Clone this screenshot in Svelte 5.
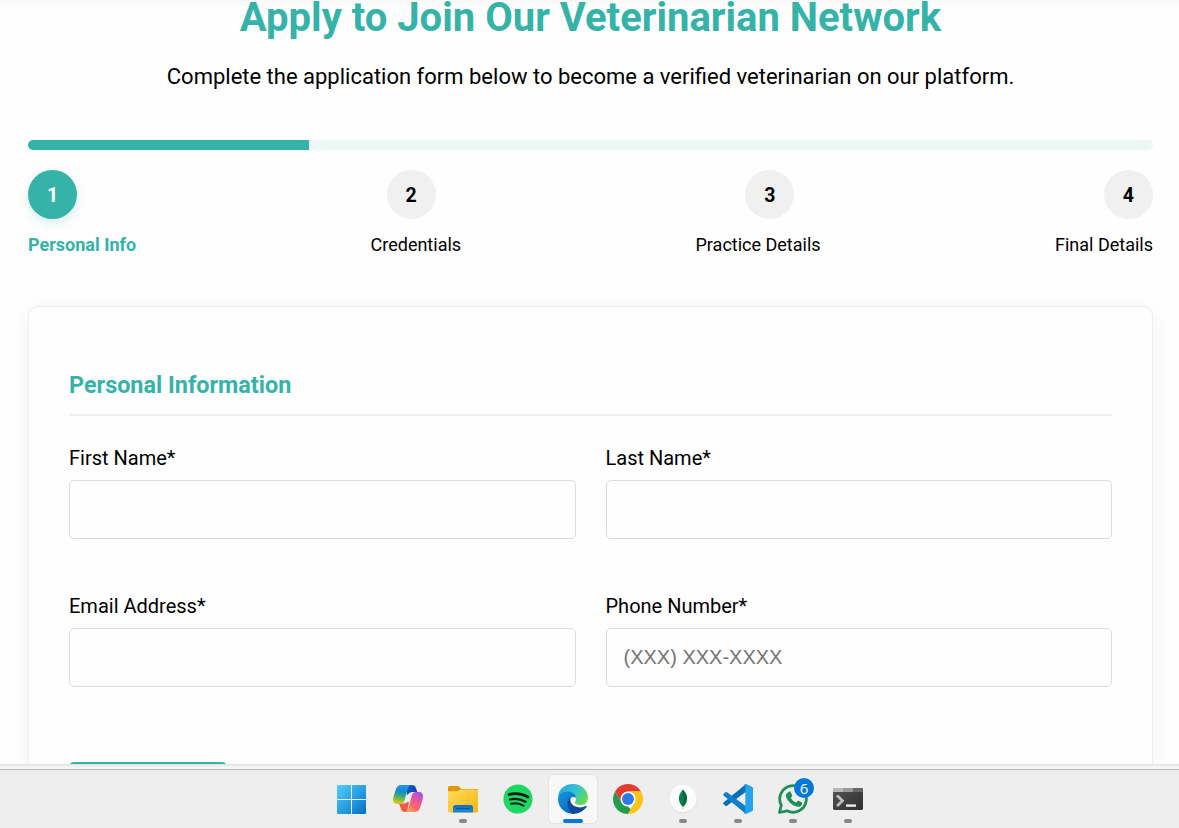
<script>
  const steps = ['Personal Info', 'Credentials', 'Practice Details', 'Final Details'];
  const fields = [
    { label: 'First Name*', hint: '' },
    { label: 'Last Name*', hint: '' },
    { label: 'Email Address*', hint: '' },
    { label: 'Phone Number*', hint: '(XXX) XXX-XXXX' }
  ];
</script>

<div class="screen">
  <main>
    <h1>Apply to Join Our Veterinarian Network</h1>
    <p class="intro">Complete the application form below to become a verified veterinarian on our platform.</p>
    <div class="progress"><div class="fill"></div></div>
    <div class="circles">
      {#each steps as _, i}
        <span class="circle" class:active={i === 0}>{i + 1}</span>
      {/each}
    </div>
    <div class="labels">
      {#each steps as step, i}
        <span class:current={i === 0}>{step}</span>
      {/each}
    </div>
    <section class="card">
      <h2>Personal Information</h2>
      <div class="grid">
        {#each fields as field}
          <label><span>{field.label}</span><input type="text" placeholder={field.hint} /></label>
        {/each}
      </div>
      <button aria-label="Next step"></button>
    </section>
  </main>

  <footer>
    <div class="edge"></div>
    <nav>
      <div class="app">
        <svg viewBox="1 0 48 48">
          <defs><linearGradient id="winAll" gradientUnits="userSpaceOnUse" x1="9" y1="10" x2="38" y2="39"><stop stop-color="#54d0fb" /><stop offset="1" stop-color="#006fc9" /></linearGradient></defs>
          <path fill="url(#winAll)" d="M10 10h13v14H9V11q0-1 1-1zM24 10H37q1 0 1 1v13H24zM9 25h14v14H10q-1 0-1-1zM24 25H38v13q0 1-1 1H24z" />
        </svg>
      </div>
      <div class="app">
        <svg viewBox="-1 0 48 48">
          <defs>
            <linearGradient id="coA" x1=".55" y1="0" x2=".35" y2="1"><stop stop-color="#1b9cf0" /><stop offset=".35" stop-color="#168acb" /><stop offset=".65" stop-color="#50b35d" /><stop offset="1" stop-color="#eac711" /></linearGradient>
            <linearGradient id="coB" x1=".8" y1="0" x2=".3" y2="1"><stop stop-color="#a04ff1" /><stop offset=".45" stop-color="#ee5890" /><stop offset=".75" stop-color="#ff6b62" /><stop offset="1" stop-color="#ffa255" /></linearGradient>
            <linearGradient id="coC" x1="0" y1="0" x2="1" y2="1"><stop stop-color="#0f55d0" /><stop offset="1" stop-color="#1b3fb3" /></linearGradient>
          </defs>
          <path fill="url(#coC)" d="M22 10h5q3 0 4 3l1.200 4H27q-3 0-4 2.500L22 20z" />
          <path fill="#f45a43" d="M14.500 28.500h4.500q2 0 3-1.500l2 0-2 10h-2q-3 0-4-3l-1-3q-.5-2-1.500-2z" />
          <path fill="url(#coA)" d="M16.500 10h9.500q-2 0-3 3l-3.500 12.500Q18.600 29 15 29h-2.600Q8 29 8 25q0-2 1-5l2-6q1.400-4 5.500-4z" />
          <path fill="url(#coB)" d="M31 17h3q4 0 4 4.500 0 2-1 5l-2 6.500q-1.400 4-5.500 4H20q2.500 0 3.300-3l3.400-13Q27.800 17 31 17z" />
        </svg>
      </div>
      <div class="app">
        <svg viewBox="-1 0 48 48">
          <defs><linearGradient id="fold" x1="0" y1="0" x2="1" y2="1"><stop stop-color="#ffdc60" /><stop offset="1" stop-color="#fbb50c" /></linearGradient>
          <linearGradient id="tray" x1="0" y1="0" x2="0" y2="1"><stop stop-color="#0c70c2" /><stop offset="1" stop-color="#1b88d8" /></linearGradient></defs>
          <path fill="#dc9a04" d="M9.500 11h8q1.200 0 2 1l1.700 2H37q1 0 1 1v3H8v-5.500q0-1.500 1.500-1.500z" />
          <path fill="url(#fold)" d="M8 16.200h10l3-1.700h15.500q1.500 0 1.500 1.500v20q0 1.500-1.500 1.500h-27Q8 37.500 8 36z" />
          <path fill="url(#tray)" d="M13 37.500V32.500q0-2.500 2.500-2.500h15Q33 30 33 32.500v5z" /><path stroke="#074f91" d="M16 33.500h14" />
        </svg><i></i>
      </div>
      <div class="app">
        <svg viewBox="-1 0 48 48"><circle cx="23" cy="24" r="14.600" fill="#1ed760" /><g fill="none" stroke="#151a17" stroke-linecap="round"><path stroke-width="2.700" d="M14 19.500q10-2.500 19 2.500" /><path stroke-width="2.300" d="M15 24.500q8-2 15.500 2.300" /><path stroke-width="1.900" d="M16 28.800q7-1.600 12.500 1.900" /></g></svg>
      </div>
      <div class="app selected">
        <svg viewBox="-1 0 48 48">
          <defs><linearGradient id="edTop" x1="0" y1=".2" x2="1" y2=".7"><stop stop-color="#2aa6dd" /><stop offset=".5" stop-color="#31c4d4" /><stop offset="1" stop-color="#68df46" /></linearGradient>
          <linearGradient id="edLeft" x1="0" y1="0" x2=".7" y2="1"><stop stop-color="#1595df" /><stop offset="1" stop-color="#0669bd" /></linearGradient></defs>
          <path fill="url(#edTop)" d="M8 23C8 14.500 14.500 9 23 9c9 0 15 6.500 15 13.500 0 5-3.500 7.500-8 7.500-3 0-5.200-1-5.200-2.200 0-1 1.200-1.300 1.200-3.500 0-3.500-3.500-6.800-8.500-6.800C12 17.500 8 21 8 23z" />
          <path fill="url(#edLeft)" d="M8 24c0-4.500 4.500-7.500 9.500-7.500 4.500 0 8 2.500 8.500 6-4-2-8 1.500-8 6 0 5.500 4.500 9.500 7.500 10.300C15.500 40 8 32.500 8 24z" />
          <path fill="#0c4c99" d="M20.500 22c-4.500 3.500-3.800 12 2.200 16.700 5.500.6 10.800-2.400 14-6.900.4-.7-.2-1.100-.9-.7-5.500 3-15.500 1-15.500-6.500 0-1 .1-1.900.2-2.600z" />
        </svg><i></i>
      </div>
      <div class="app">
        <svg viewBox="-1 0 48 48"><path fill="#e33b2e" d="M10 16.500A15 15 0 0 1 36 16.500H23l-6.500 11.300z" /><path fill="#229b4b" d="M10 16.500l6.500 11.200L23 31.500l3 3-3.200 4.500A15 15 0 0 1 10 16.500z" /><path fill="#fdc316" d="M36 16.500A15 15 0 0 1 22.800 39l6.700-11.300V20l-6.500-3.500z" /><circle cx="23" cy="24" r="7.500" fill="#fff" /><circle cx="23" cy="24" r="6" fill="#2c7be9" /></svg>
      </div>
      <div class="app">
        <svg viewBox="-1 0 48 48"><circle cx="23" cy="24" r="14.200" fill="#dedede" /><circle cx="23" cy="23.500" r="13.700" fill="#fcfcfc" /><path fill="#08834d" d="M23 14.500c-6 6-5 13 0 17.500z" /><path fill="#08683e" d="M23 14.500c6 6 5 13 0 17.500z" /><path stroke="#9db9a8" stroke-width=".7" d="M23 31v3" /></svg><i></i>
      </div>
      <div class="app">
        <svg viewBox="-1 0 48 48"><path fill="#0870b5" d="M31 9L8.500 27.500q-.7.700 0 1.500l2 1.800q.7.600 1.500 0L31 16.700z" /><path fill="#127fc8" d="M31 39L8.500 20.500q-.7-.7 0-1.500l2-1.800q.7-.6 1.500 0L31 31.300z" /><path fill="#27a2ef" d="M31 9l6 2.700q1 .5 1 1.500v21.600q0 1-1 1.500L31 39q-1.400.4-2.300-.6 1.600.7 1.600-1.200V10.800q0-1.900-1.600-1.200.9-1 2.300-.6z" /></svg><i></i>
      </div>
      <div class="app">
        <svg viewBox="-1 0 48 48"><path fill="none" stroke="#1f8f58" stroke-width="2.800" stroke-linejoin="round" d="M9.500 37.500l1.800-7.300A13.300 13.300 0 1 1 17 35.800z" /><path fill="#1f8f58" d="M18.200 17.200q.8-1 1.900-.6.500.1.800.8l1.200 2.800q.3.700-.2 1.300l-1.100 1.400q1.900 3.300 5.300 4.800l1.400-1.700q.5-.6 1.200-.2l2.900 1.400q.9.500.6 1.500-.7 3.100-4.300 3.100-4.500-.5-8.500-4.600-6.500-7.300-1.200-10z" /></svg>
        <b>6</b><i></i>
      </div>
      <div class="app">
        <svg viewBox="-1 0 48 48"><defs><linearGradient id="term" x1="0" y1="0" x2="1" y2="1"><stop stop-color="#535353" /><stop offset="1" stop-color="#303030" /></linearGradient></defs><rect x="8" y="13" width="30" height="22" rx="1.500" fill="url(#term)" /><path fill="#b7b7b7" d="M9.500 13H18v4H8v-2.500q0-1.500 1.500-1.500z" /><path fill="#989898" d="M18 13h10v4H18z" /><path fill="#686868" d="M28 13h8.500q1.500 0 1.500 1.500V17H28z" /><path fill="none" stroke="#bdbdbd" stroke-width="2.800" d="M12 20.500l5.500 5.300-5.500 5.200" /><path stroke="#eee" stroke-width="2.400" d="M21 30.600h10" /></svg><i></i>
      </div>
    </nav>
  </footer>
</div>

<style>
  :global(body) { margin: 0; background: #fefefe; }
  .screen { height: 828px; overflow: hidden; display: flex; flex-direction: column; font-family: Roboto, sans-serif; color: #000; }
  main { box-sizing: border-box; height: 764px; overflow: hidden; padding: 0 26px 0 28px; background: linear-gradient(#f9f9f9, #fefefe 7px); }
  h1 { margin: 0; text-align: center; font-size: 40px; line-height: 36px; font-weight: 700; color: #36b3a8; white-space: nowrap; }
  .intro { margin: 25px 0 0; font-size: 22px; line-height: 32px; text-align: center; white-space: nowrap; }
  .progress { margin-top: 47px; height: 10px; border-radius: 5px; background: #edf7f5; overflow: hidden; }
  .fill { width: 25%; height: 100%; background: #36b3a8; }
  .circles { margin-top: 20px; display: flex; justify-content: space-between; }
  .circle { width: 49px; height: 49px; border-radius: 50%; background: #f0f0f0; font-size: 19.500px; line-height: 51px; text-align: center; font-weight: 700; }
  .active { background: #36b3a8; color: #fff; box-shadow: 0 4px 10px rgba(54, 179, 168, .2); }
  .labels { margin-top: 12px; display: flex; justify-content: space-between; font-size: 18px; line-height: 28px; white-space: nowrap; }
  .current { color: #36b3a8; font-weight: 700; }
  .card { box-sizing: border-box; margin-top: 47px; height: 600px; padding: 60px 40px 0; border: 1px solid #eee; border-radius: 10px; background: #fefefe; box-shadow: 0 5px 20px rgba(0, 0, 0, .05); }
  h2 { margin: 0; height: 47px; border-bottom: 2px solid #f0f0f0; font-size: 23.400px; line-height: 36px; font-weight: 700; color: #36b3a8; }
  .grid { margin-top: 26px; display: grid; grid-template-columns: 1fr 1fr; column-gap: 30px; row-gap: 51px; }
  label { display: flex; flex-direction: column; height: 97px; font-size: 20px; line-height: 32px; }
  label span { height: 38px; }
  input { box-sizing: border-box; width: 100%; height: 59px; padding: 0 17px; border: 1px solid #ddd; border-radius: 5px; background: #fefefe; font: 20px "Liberation Sans", sans-serif; outline: 0; }
  input::placeholder { color: #757575; opacity: 1; }
  button { display: block; width: 158px; height: 58px; margin-top: 75px; border: 0; border-radius: 5px; background: #36b3a8; }
  footer { height: 64px; background: #eee; }
  .edge { box-sizing: border-box; height: 6px; border-bottom: 1px solid #b9b9b9; background: linear-gradient(#e1e1e1, #f5f5f5 3px); }
  nav { display: flex; justify-content: center; gap: 7px; padding: 5px 0 0 22px; }
  .app { position: relative; width: 48px; height: 48px; border-radius: 5px; }
  .app svg { display: block; width: 48px; height: 48px; }
  .app i { position: absolute; left: 20px; bottom: 0; width: 8px; height: 4px; border-radius: 2px; background: #888; }
  .selected { background: #f8f8f8; box-shadow: 0 0 0 1px #e4e4e4; }
  .selected i { left: 14px; width: 20px; background: #0878d4; }
  .app b { position: absolute; left: 25px; top: 3px; width: 20px; height: 20px; border-radius: 50%; background: #0078d7; color: #fff; font: 15px/20px "Open Sans", sans-serif; text-align: center; }
</style>
